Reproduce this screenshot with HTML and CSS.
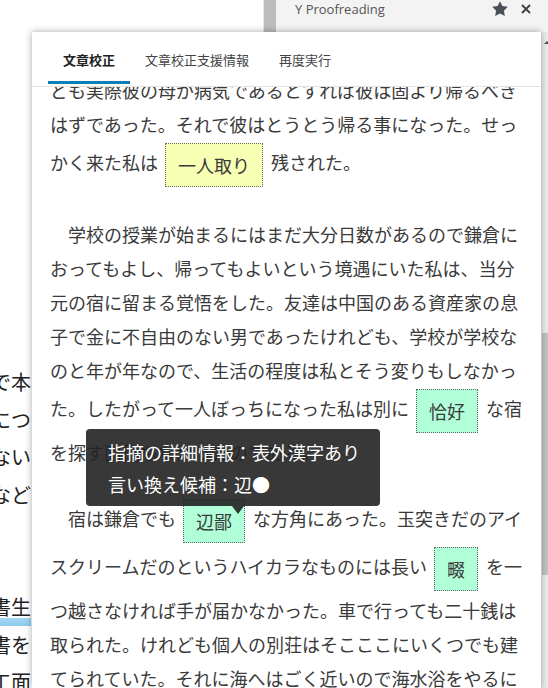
FILE: index.html
```html
<!DOCTYPE html>
<html lang="ja">
<head>
<meta charset="utf-8">
<title>Y Proofreading</title>
<link rel="stylesheet" href="styles.css">
</head>
<body>
<div class="app">
  <div class="doc">
    <div class="doc-line">だからここでもただ先生と書くだけで本</div>
    <div class="doc-line">その方が私につ</div>
    <div class="doc-line">筆を執っても心持は同じ事である。よそよそしくない</div>
    <div class="doc-line">頭文字など</div>
    <div class="doc-line"></div>
    <div class="doc-line"></div>
    <div class="doc-line">その時私はまだ若々しい<span class="doc-mark">書生</span></div>
    <div class="doc-line">ぜひ来いという端書を</div>
    <div class="doc-line">私は多少の金を工面</div>
  </div>
  <div class="doc-scroll"></div>
  <div class="pane">
    <div class="pane-head">
      <span class="pane-title">Y Proofreading</span>
      <svg class="pane-star" width="18" height="18" viewBox="0 0 24 24"><path d="M12 1.5l3.2 6.6 7.2 1-5.2 5.1 1.3 7.2L12 18l-6.5 3.4 1.3-7.2-5.2-5.1 7.2-1z" fill="#4b5058"/></svg>
      <svg class="pane-close" width="10" height="10" viewBox="0 0 10 10"><path d="M1 1l8 8M9 1l-8 8" stroke="#3b3f45" stroke-width="1.8"/></svg>
    </div>
    <div class="pane-body">
      <div class="pane-scroll">
        <span class="pane-arrow"></span>
        <div class="pane-thumb"></div>
      </div>
    </div>
  </div>

  <div class="dialog">
    <div class="tabs">
      <div class="tab active">文章校正</div>
      <div class="tab">文章校正支援情報</div>
      <div class="tab">再度実行</div>
    </div>
    <div class="result">
      <p class="para first">と相談をした。私にはどうしていいか分らなかった。けれども実際彼の母が病気であるとすれば彼は固より帰るべきはずであった。それで彼はとうとう帰る事になった。せっかく来た私は<span class="mark warn">一人取り</span>残された。</p>
      <p class="para">　学校の授業が始まるにはまだ大分日数があるので鎌倉におってもよし、帰ってもよいという境遇にいた私は、当分元の宿に留まる覚悟をした。友達は中国のある資産家の息子で金に不自由のない男であったけれども、学校が学校なのと年が年なので、生活の程度は私とそう変りもしなかった。したがって一人ぼっちになった私は別に<span class="mark kanji">恰好</span>な宿を探す面倒もなかったのである。</p>
      <p class="para">　宿は鎌倉でも<span class="mark kanji tip-anchor">辺鄙<span class="tooltip">指摘の詳細情報：表外漢字あり<br>言い換え候補：辺●</span></span>な方角にあった。玉突きだのアイスクリームだのというハイカラなものには長い<span class="mark kanji">畷</span>を一つ越さなければ手が届かなかった。車で行っても二十銭は取られた。けれども個人の別荘はそこここにいくつでも建てられていた。それに海へはごく近いので海水浴をやるには至極便利な地位を占めていた。</p>
    </div>
  </div>
</div>
</body>
</html>
```

FILE: styles.css
```css
* { box-sizing: border-box; }

html, body {
  margin: 0;
  height: 100%;
  overflow: hidden;
}

body {
  background: #fff;
  font-family: "Noto Sans CJK JP", sans-serif;
  color: #333;
}

.app {
  display: flex;
  height: 688px;
  position: relative;
}

/* document behind the dialog */
.doc {
  width: 263px;
  padding-top: 363px;
  font-size: 20px;
  line-height: 37.5px;
  color: #222;
}
.doc-line {
  display: flex;
  justify-content: flex-end;
  width: 31px;
  height: 37.5px;
  overflow: hidden;
  white-space: nowrap;
}
.doc-mark {
  background: linear-gradient(to bottom, transparent 78%, #a9d7f1 78%, #8ccbef 100%);
}

.doc-scroll {
  width: 13px;
  background: #bdbdbd;
  border-left: 1px solid #e6e6e6;
}

/* task pane */
.pane {
  flex: 1;
  display: flex;
  flex-direction: column;
  background: #f3f3f4;
}
.pane-head {
  display: flex;
  align-items: center;
  height: 18px;
  padding: 0 17px 0 19px;
}
.pane-title {
  flex: 1;
  font-family: "Open Sans", sans-serif;
  font-size: 13px;
  color: #555;
}
.pane-star { margin-right: 12px; }

.pane-body {
  flex: 1;
  display: flex;
  justify-content: flex-end;
  padding-top: 14px;
}
.pane-scroll {
  width: 7px;
  position: relative;
  background: #ececec;
}
.pane-arrow {
  position: absolute;
  top: 9px;
  left: 3px;
  border: 3px solid transparent;
  border-bottom: 3px solid #555;
  border-top: 0;
}
.pane-thumb {
  position: absolute;
  top: 301px;
  left: 1px;
  right: 0;
  height: 242px;
  background: #c2c2c2;
}

/* proofreading dialog */
.dialog {
  position: absolute;
  left: 32px;
  top: 32px;
  width: 509px;
  bottom: 0;
  display: flex;
  flex-direction: column;
  background: #fff;
  box-shadow: 0 0 7px rgba(0, 0, 0, 0.35);
}

.tabs {
  display: flex;
  padding: 0 16px 2px;
  border-bottom: 1px solid #e2e2e2;
}
.tab {
  padding: 18px 15px 11px;
  font-size: 13px;
  line-height: 20px;
  color: #444;
  border-bottom: 3px solid transparent;
}
.tab.active {
  color: #222;
  font-weight: bold;
  border-bottom-color: #0e7fb6;
}

.result {
  flex: 1;
  overflow: hidden;
  padding: 0 15px 0 18px;
}
.para {
  width: 476px;
  margin: 0 0 28px;
  font-size: 18px;
  line-height: 34px;
  color: #3a3a3a;
}
.para.first { margin-top: -48px; }

.mark {
  display: inline-block;
  margin: 2px 8px 2px 7px;
  padding: 12px;
  line-height: 18px;
  border: 1px dotted #666;
  vertical-align: middle;
}
.mark.warn { background: #f6ffb3; }
.mark.kanji { background: #b1ffd9; }

.tip-anchor { position: relative; }
.tooltip {
  position: absolute;
  left: -98px;
  top: -71px;
  padding: 7px 20px 6px 22px;
  font-size: 18px;
  line-height: 32px;
  white-space: nowrap;
  color: #fff;
  text-align: left;
  background: rgba(34, 34, 34, 0.9);
  border-radius: 4px;
}
.tooltip::after {
  content: "";
  position: absolute;
  left: 146px;
  bottom: -8px;
  border: 6px solid transparent;
  border-top: 8px solid rgba(34, 34, 34, 0.9);
  border-bottom: 0;
}
```
